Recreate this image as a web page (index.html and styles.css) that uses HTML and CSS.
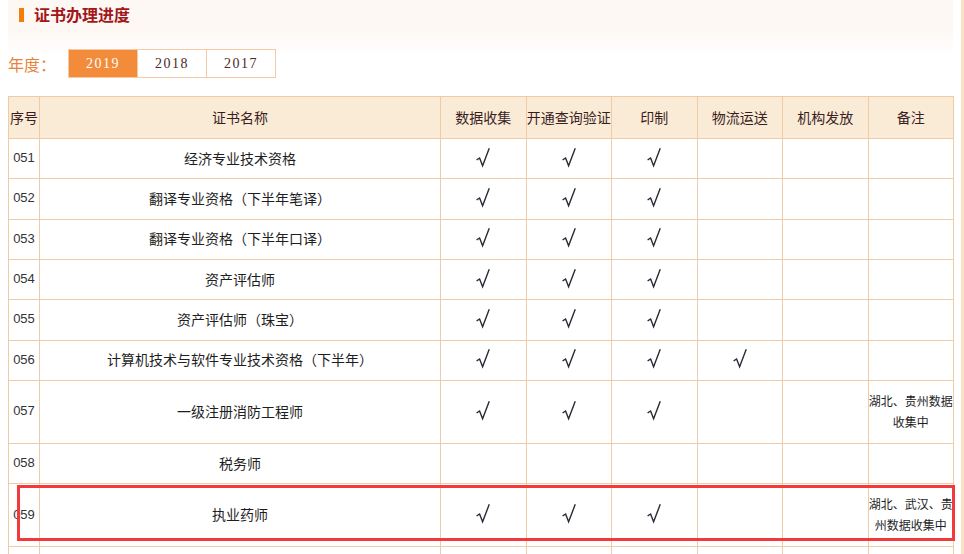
FILE: index.html
```html
<!DOCTYPE html>
<html lang="zh-CN">
<head>
<meta charset="utf-8">
<title>证书办理进度</title>
<link rel="stylesheet" href="styles.css">
</head>
<body>
<div class="page">
  <div class="top">
    <div class="band">
      <span class="band-mark"></span>
      <h2 class="band-title">证书办理进度</h2>
    </div>
    <div class="years">
      <span class="years-label">年度：</span>
      <div class="years-tabs">
        <span class="tab active">2019</span>
        <span class="tab">2018</span>
        <span class="tab">2017</span>
      </div>
    </div>
  </div>
  <div class="table-wrap">
    <table class="progress">
      <colgroup>
        <col class="c-no"><col class="c-name"><col class="c-s"><col class="c-s"><col class="c-s"><col class="c-s"><col class="c-s"><col class="c-s">
      </colgroup>
      <thead>
        <tr class="head">
          <th>序号</th><th>证书名称</th><th>数据收集</th><th>开通查询验证</th><th>印制</th><th>物流运送</th><th>机构发放</th><th>备注</th>
        </tr>
      </thead>
      <tbody>
        <tr class="row"><td class="no">051</td><td>经济专业技术资格</td><td class="ok"><svg class="chk" viewBox="0 0 14 20" aria-label="√"><path d="M1.2 11.6 L3.6 10 L6.6 17.8 L13 1"/></svg></td><td class="ok"><svg class="chk" viewBox="0 0 14 20" aria-label="√"><path d="M1.2 11.6 L3.6 10 L6.6 17.8 L13 1"/></svg></td><td class="ok"><svg class="chk" viewBox="0 0 14 20" aria-label="√"><path d="M1.2 11.6 L3.6 10 L6.6 17.8 L13 1"/></svg></td><td></td><td></td><td></td></tr>
        <tr class="row"><td class="no">052</td><td>翻译专业资格（下半年笔译）</td><td class="ok"><svg class="chk" viewBox="0 0 14 20" aria-label="√"><path d="M1.2 11.6 L3.6 10 L6.6 17.8 L13 1"/></svg></td><td class="ok"><svg class="chk" viewBox="0 0 14 20" aria-label="√"><path d="M1.2 11.6 L3.6 10 L6.6 17.8 L13 1"/></svg></td><td class="ok"><svg class="chk" viewBox="0 0 14 20" aria-label="√"><path d="M1.2 11.6 L3.6 10 L6.6 17.8 L13 1"/></svg></td><td></td><td></td><td></td></tr>
        <tr class="row"><td class="no">053</td><td>翻译专业资格（下半年口译）</td><td class="ok"><svg class="chk" viewBox="0 0 14 20" aria-label="√"><path d="M1.2 11.6 L3.6 10 L6.6 17.8 L13 1"/></svg></td><td class="ok"><svg class="chk" viewBox="0 0 14 20" aria-label="√"><path d="M1.2 11.6 L3.6 10 L6.6 17.8 L13 1"/></svg></td><td class="ok"><svg class="chk" viewBox="0 0 14 20" aria-label="√"><path d="M1.2 11.6 L3.6 10 L6.6 17.8 L13 1"/></svg></td><td></td><td></td><td></td></tr>
        <tr class="row"><td class="no">054</td><td>资产评估师</td><td class="ok"><svg class="chk" viewBox="0 0 14 20" aria-label="√"><path d="M1.2 11.6 L3.6 10 L6.6 17.8 L13 1"/></svg></td><td class="ok"><svg class="chk" viewBox="0 0 14 20" aria-label="√"><path d="M1.2 11.6 L3.6 10 L6.6 17.8 L13 1"/></svg></td><td class="ok"><svg class="chk" viewBox="0 0 14 20" aria-label="√"><path d="M1.2 11.6 L3.6 10 L6.6 17.8 L13 1"/></svg></td><td></td><td></td><td></td></tr>
        <tr class="row"><td class="no">055</td><td>资产评估师（珠宝）</td><td class="ok"><svg class="chk" viewBox="0 0 14 20" aria-label="√"><path d="M1.2 11.6 L3.6 10 L6.6 17.8 L13 1"/></svg></td><td class="ok"><svg class="chk" viewBox="0 0 14 20" aria-label="√"><path d="M1.2 11.6 L3.6 10 L6.6 17.8 L13 1"/></svg></td><td class="ok"><svg class="chk" viewBox="0 0 14 20" aria-label="√"><path d="M1.2 11.6 L3.6 10 L6.6 17.8 L13 1"/></svg></td><td></td><td></td><td></td></tr>
        <tr class="row"><td class="no">056</td><td>计算机技术与软件专业技术资格（下半年）</td><td class="ok"><svg class="chk" viewBox="0 0 14 20" aria-label="√"><path d="M1.2 11.6 L3.6 10 L6.6 17.8 L13 1"/></svg></td><td class="ok"><svg class="chk" viewBox="0 0 14 20" aria-label="√"><path d="M1.2 11.6 L3.6 10 L6.6 17.8 L13 1"/></svg></td><td class="ok"><svg class="chk" viewBox="0 0 14 20" aria-label="√"><path d="M1.2 11.6 L3.6 10 L6.6 17.8 L13 1"/></svg></td><td class="ok"><svg class="chk" viewBox="0 0 14 20" aria-label="√"><path d="M1.2 11.6 L3.6 10 L6.6 17.8 L13 1"/></svg></td><td></td><td></td></tr>
        <tr class="row tall"><td class="no">057</td><td>一级注册消防工程师</td><td class="ok"><svg class="chk" viewBox="0 0 14 20" aria-label="√"><path d="M1.2 11.6 L3.6 10 L6.6 17.8 L13 1"/></svg></td><td class="ok"><svg class="chk" viewBox="0 0 14 20" aria-label="√"><path d="M1.2 11.6 L3.6 10 L6.6 17.8 L13 1"/></svg></td><td class="ok"><svg class="chk" viewBox="0 0 14 20" aria-label="√"><path d="M1.2 11.6 L3.6 10 L6.6 17.8 L13 1"/></svg></td><td></td><td></td><td class="note">湖北、贵州数据收集中</td></tr>
        <tr class="row"><td class="no">058</td><td>税务师</td><td></td><td></td><td></td><td></td><td></td><td></td></tr>
        <tr class="row tall"><td class="no">059</td><td>执业药师</td><td class="ok"><svg class="chk" viewBox="0 0 14 20" aria-label="√"><path d="M1.2 11.6 L3.6 10 L6.6 17.8 L13 1"/></svg></td><td class="ok"><svg class="chk" viewBox="0 0 14 20" aria-label="√"><path d="M1.2 11.6 L3.6 10 L6.6 17.8 L13 1"/></svg></td><td class="ok"><svg class="chk" viewBox="0 0 14 20" aria-label="√"><path d="M1.2 11.6 L3.6 10 L6.6 17.8 L13 1"/></svg></td><td></td><td></td><td class="note">湖北、武汉、贵州数据收集中</td></tr>
        <tr class="row"><td class="no"></td><td></td><td></td><td></td><td></td><td></td><td></td><td></td></tr>
      </tbody>
    </table>
    <div class="highlight"></div>
  </div>
</div>
</body>
</html>
```
FILE: styles.css
```css
html, body {
  margin: 0;
  padding: 0;
  background: #fff;
}
body {
  font-family: "Noto Sans CJK SC", "Liberation Sans", sans-serif;
  font-size: 14px;
  color: #222;
  overflow: hidden;
}
.page {
  width: 953px;
  padding-left: 8px;
  border-right: 3px solid #fde0c2;
  min-height: 554px;
  box-sizing: content-box;
}
.top {
  width: 945px;
  background: linear-gradient(to bottom, #fdf8f3 0, #fdf8f3 31px, #fefbf8 40px, #ffffff 56px);
  padding-bottom: 18px;
}
.band {
  height: 31px;
  display: flex;
  align-items: center;
  padding-left: 11px;
}
.band-mark {
  width: 5px;
  height: 14px;
  background: #f47c0a;
  margin-right: 10px;
  margin-top: -2px;
}
.band-title {
  margin: 0;
  font-size: 16px;
  font-weight: bold;
  color: #a3161a;
  line-height: 20px;
  margin-top: -3px;
}
.years {
  margin-top: 18px;
  display: flex;
  align-items: center;
  height: 29px;
}
.years-label {
  width: 60px;
  font-size: 16px;
  color: #e8833a;
  line-height: 20px;
  margin-top: 1px;
}
.years-tabs {
  display: flex;
  border: 1px solid #f6c9a2;
}
.tab {
  width: 68px;
  height: 27px;
  line-height: 27px;
  text-align: center;
  font-family: "Liberation Serif", serif;
  font-size: 14px;
  letter-spacing: 1.5px;
  color: #4a2a2a;
  background: #fff;
  border-left: 1px solid #f6c9a2;
}
.tab:first-child {
  border-left: 0;
}
.tab.active {
  background: #f28b3a;
  color: #fff;
}
.table-wrap {
  position: relative;
  width: 945px;
}
.progress {
  width: 945px;
  border-collapse: collapse;
  table-layout: fixed;
}
.c-no { width: 31px; }
.c-name { width: 401px; }
.c-s { width: 85.5px; }
.progress th,
.progress td {
  border: 1px solid #efcba7;
  text-align: center;
  vertical-align: middle;
  padding: 0 0 2px 0;
}
.head th {
  height: 39px;
  background: #faebd7;
  font-weight: normal;
  font-size: 14px;
  color: #3a1e1e;
  white-space: nowrap;
}
.row td {
  height: 37.33px;
  font-size: 14px;
  color: #1e1e1e;
}
.row.tall td {
  height: 60px;
}
.no {
  font-family: "Liberation Sans", sans-serif;
  font-size: 13px !important;
  color: #333 !important;
}
.ok {
  line-height: 0;
}
.chk {
  width: 14px;
  height: 20px;
  display: inline-block;
  vertical-align: middle;
  fill: none;
  stroke: #2a2a36;
  stroke-width: 1.4;
  stroke-linejoin: miter;
  stroke-linecap: square;
}
.note {
  font-size: 12px !important;
  line-height: 21px;
  color: #1e1e1e;
}
.highlight {
  position: absolute;
  left: 9px;
  top: 389px;
  width: 932px;
  height: 50px;
  border: 3px solid #f23a3a;
  pointer-events: none;
}
```
